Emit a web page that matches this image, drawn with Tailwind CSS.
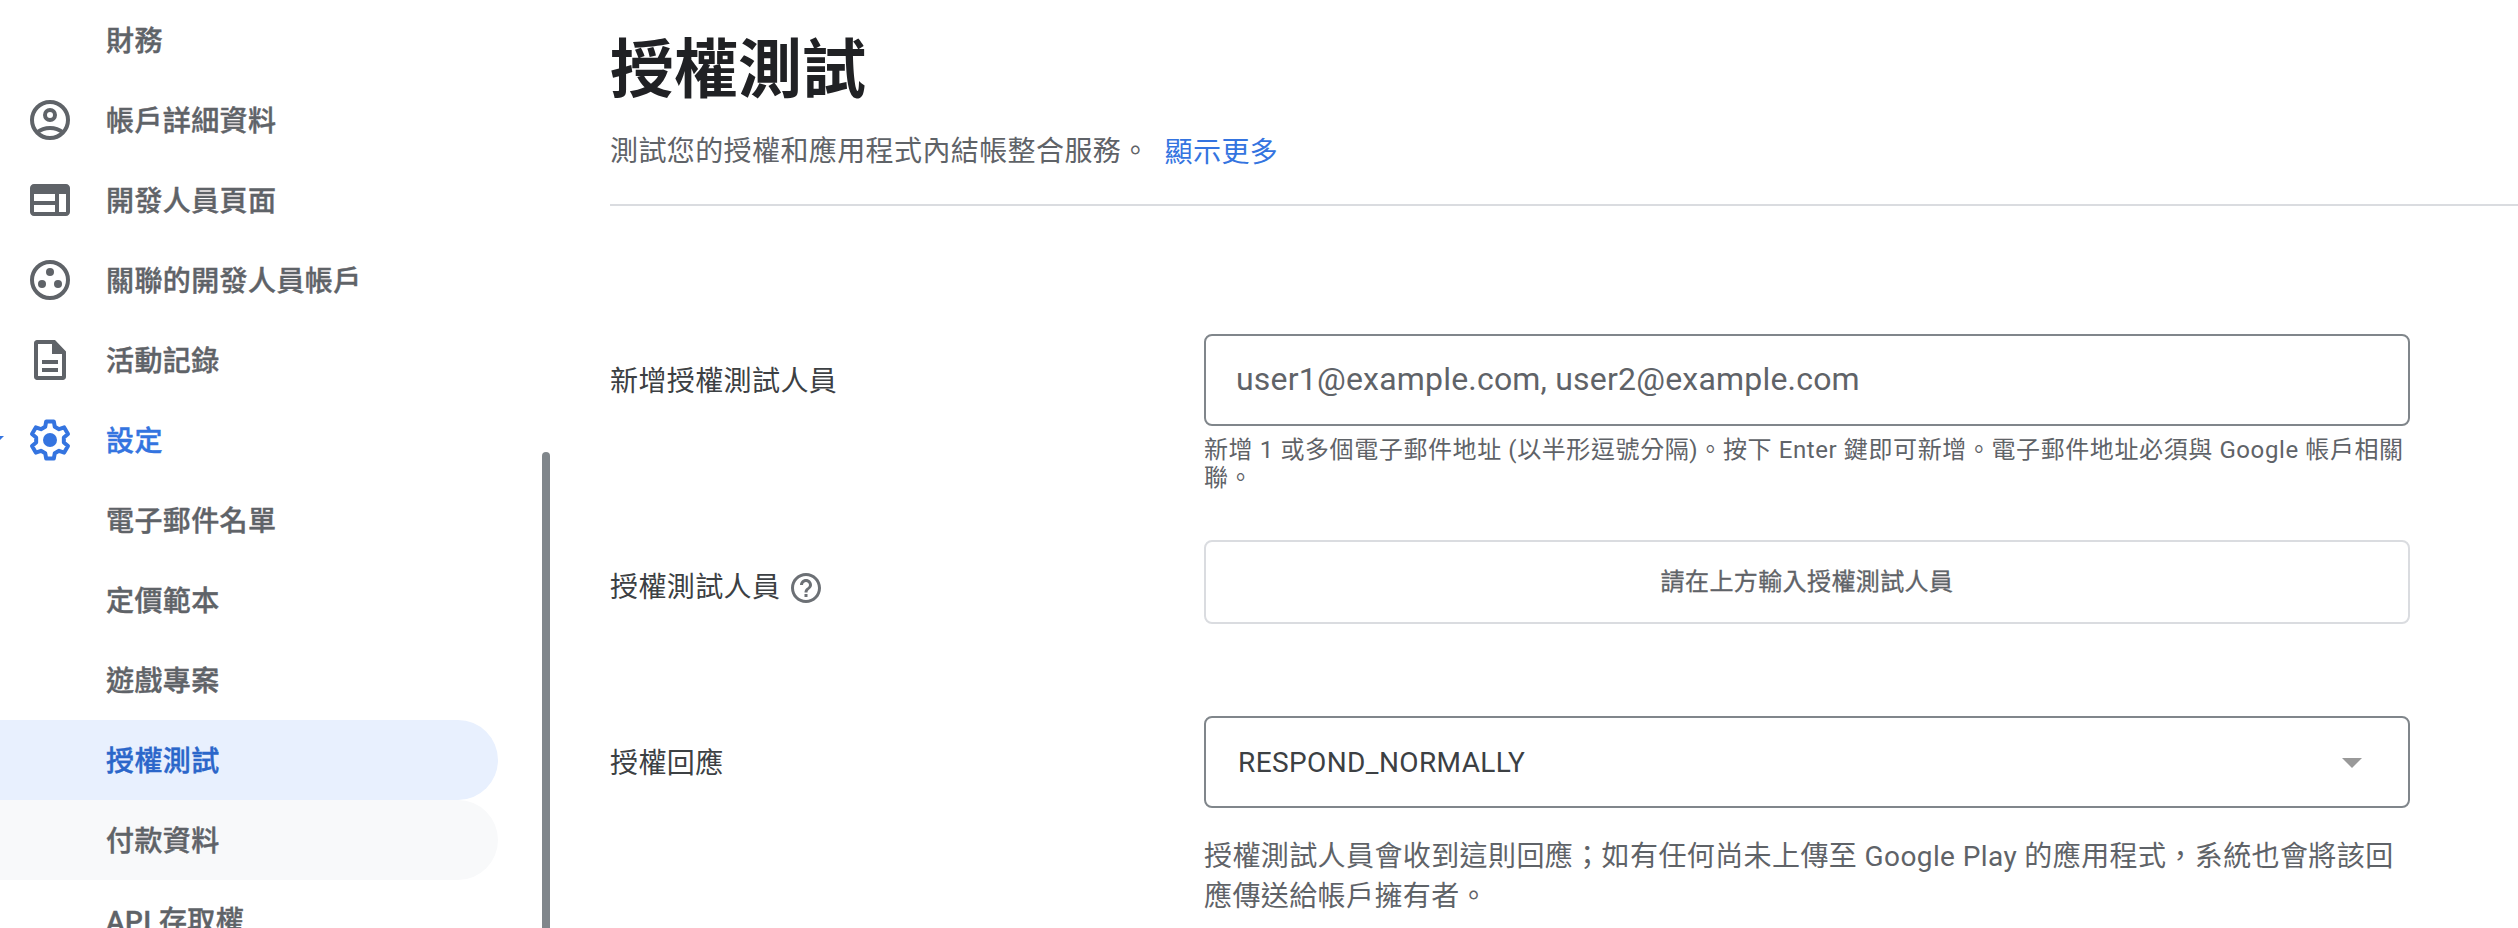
<!DOCTYPE html>
<html lang="zh-Hant">
<head>
<meta charset="utf-8">
<title>授權測試</title>
<script src="https://cdn.jsdelivr.net/npm/@tailwindcss/browser@4"></script>
</head>
<body class="h-[928px] overflow-hidden bg-white font-[Roboto,'Noto_Sans_CJK_TC',sans-serif] text-[28px] tracking-[0.4px] text-[#5f6368]">
<div class="flex h-[928px] overflow-hidden">
  <aside class="relative flex w-[550px] shrink-0 justify-between overflow-hidden">
    <nav class="w-[498px] shrink-0 font-medium [-webkit-text-stroke:0.4px]">
      <a class="flex h-20 items-center pt-[3px] pl-[106px]">財務</a>
      <a class="flex h-20 items-center gap-8 pl-[26px]">
        <svg class="size-12 shrink-0" viewBox="0 0 24 24" fill="none" stroke="currentColor" stroke-width="2"><circle cx="12" cy="12" r="9"/><circle cx="12" cy="9.5" r="2.5"/><path d="M5.600 18.200C7.300 16.800 9.500 16 12 16s4.700.8 6.400 2.200"/></svg>
        <span class="pt-[3px]">帳戶詳細資料</span></a>
      <a class="flex h-20 items-center gap-8 pl-[26px]">
        <svg class="size-12 shrink-0" viewBox="0 0 24 24" fill="currentColor"><path fill-rule="evenodd" d="M4 4h16c1.100 0 2 .9 2 2v12c0 1.100-.9 2-2 2H4c-1.100 0-2-.9-2-2V6c0-1.100.9-2 2-2zM4 9v3.500h10.500V9zM4 14.500V18h10.500v-3.500zM16.500 9v9H20V9z"/></svg>
        <span class="pt-[3px]">開發人員頁面</span></a>
      <a class="flex h-20 items-center gap-8 pl-[26px]">
        <svg class="size-12 shrink-0" viewBox="0 0 24 24" fill="currentColor"><circle cx="12" cy="12" r="9" fill="none" stroke="currentColor" stroke-width="2"/><circle cx="12" cy="8" r="2"/><circle cx="8" cy="14" r="2"/><circle cx="16" cy="14" r="2"/></svg>
        <span class="pt-[3px]">關聯的開發人員帳戶</span></a>
      <a class="flex h-20 items-center gap-8 pl-[26px]">
        <svg class="size-12 shrink-0" viewBox="0 0 24 24" fill="currentColor"><path fill-rule="evenodd" d="M5.500 2H14.500L20 7.700V20.500c0 .8-.7 1.500-1.500 1.500h-13c-.8 0-1.500-.7-1.500-1.500v-17C4 2.700 4.700 2 5.500 2zM6 4v16h12V9h-5V4z"/><path d="M8 12h8v2H8zM8 16h8v2H8z"/></svg>
        <span class="pt-[3px]">活動記錄</span></a>
      <a class="flex h-20 items-center gap-8 pl-[26px] text-[#3474e0]">
        <svg class="absolute top-[436px] left-0 h-1 w-1" viewBox="0 0 4 4" fill="currentColor"><path d="M0 0h4L0 4z"/></svg>
        <svg class="size-12 shrink-0" viewBox="-12 -12 24 24" fill="currentColor"><path fill="none" stroke="currentColor" stroke-width="2" stroke-linejoin="round" d="M-2.400-6.600L-1.900-9.300H1.900L2.400-6.600L4.520-5.380L7.100-6.300L9-3L6.920-1.220V1.220L9 3L7.100 6.300L4.520 5.380L2.400 6.600L1.900 9.300H-1.900L-2.400 6.600L-4.520 5.380L-7.100 6.300L-9 3L-6.920 1.220V-1.220L-9-3L-7.100-6.300L-4.520-5.380z"/><circle r="3.500"/></svg>
        <span class="pt-[3px]">設定</span></a>
      <a class="flex h-20 items-center pt-[3px] pl-[106px]">電子郵件名單</a>
      <a class="flex h-20 items-center pt-[3px] pl-[106px]">定價範本</a>
      <a class="flex h-20 items-center pt-[3px] pl-[106px]">遊戲專案</a>
      <a class="flex h-20 items-center rounded-r-full bg-[#e8f0fe] pt-[3px] pl-[106px] text-[#2b66ca]">授權測試</a>
      <a class="flex h-20 items-center rounded-r-full bg-[#f8f9fa] pt-[3px] pl-[106px]">付款資料</a>
      <a class="flex h-20 items-center pt-[3px] pl-[106px]">API 存取權</a>
    </nav>
    <div class="mt-[452px] h-[500px] w-2 rounded-full bg-[#80868b]"></div>
  </aside>
  <main class="ml-[60px] flex-1">
    <header class="h-[206px] border-b-2 border-[#dadce0]">
      <h1 class="pt-[31px] text-[64px] leading-20 font-bold tracking-normal text-[#202124]">授權測試</h1>
      <p class="mt-[21px] flex gap-[15px] leading-10"><span>測試您的授權和應用程式內結帳整合服務。</span><a class="pt-px text-[#3474e0]">顯示更多</a></p>
    </header>
    <section class="mt-32 grid w-[1800px] grid-cols-[594px_1206px]">
      <div class="flex h-[92px] items-center pt-[3px] text-[#3c4043]">新增授權測試人員</div>
      <div class="h-[206px]">
        <div class="flex h-[92px] items-center rounded-lg border-2 border-[#80868b] pb-[2px] pl-[30px] text-[32px] tracking-[0.2px]">user1@example.com, user2@example.com</div>
        <p class="mt-[10px] text-[24px] leading-7 tracking-[0.6px] whitespace-nowrap">新增 1 或多個電子郵件地址 (以半形逗號分隔)。按下 Enter 鍵即可新增。電子郵件地址必須與 Google 帳戶相關<br>聯。</p>
      </div>
      <div class="flex h-[92px] items-center gap-[8px] text-[#3c4043]"><span class="pt-[3px]">授權測試人員</span>
        <svg class="mt-1 size-9 text-[#6c7075]" viewBox="0 0 24 24" fill="currentColor"><path d="M11 18h2v-2h-2v2zm1-16C6.480 2 2 6.480 2 12s4.480 10 10 10 10-4.480 10-10S17.520 2 12 2zm0 18c-4.410 0-8-3.590-8-8s3.590-8 8-8 8 3.590 8 8-3.590 8-8 8zm0-14c-2.210 0-4 1.790-4 4h2c0-1.100.9-2 2-2s2 .9 2 2c0 2-3 1.750-3 5h2c0-2.250 3-2.500 3-5 0-2.210-1.790-4-4-4z"/></svg></div>
      <div class="h-[176px]">
        <div class="flex h-[84px] items-center justify-center rounded-lg border-2 border-[#dadce0] text-[24px] [-webkit-text-stroke:0.3px]">請在上方輸入授權測試人員</div>
      </div>
      <div class="flex h-[92px] items-center pt-[3px] text-[#3c4043]">授權回應</div>
      <div>
        <div class="flex h-[92px] items-center justify-between rounded-lg border-2 border-[#80868b] pr-[46px] pl-8 text-[#3c4043]"><span class="pt-px">RESPOND_NORMALLY</span>
          <svg class="mt-[2px] h-[10px] w-5" viewBox="0 0 20 10" fill="#999"><path d="M0 0h20L10 10z"/></svg></div>
        <p class="mt-[29px] leading-10 whitespace-nowrap">授權測試人員會收到這則回應；如有任何尚未上傳至 Google Play 的應用程式，系統也會將該回<br>應傳送給帳戶擁有者。</p>
      </div>
    </section>
  </main>
</div>
</body>
</html>
